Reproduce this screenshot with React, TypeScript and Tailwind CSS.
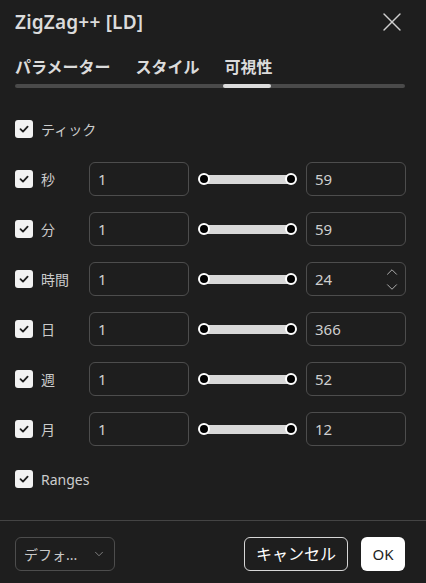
import { X, ChevronDown, ChevronUp } from "lucide-react";

const font = {
  fontFamily: '"Noto Sans", "Noto Sans CJK JP", sans-serif',
};

const rows = [
  { label: "秒", max: "59" },
  { label: "分", max: "59" },
  { label: "時間", max: "24", spin: true },
  { label: "日", max: "366" },
  { label: "週", max: "52" },
  { label: "月", max: "12" },
];

const Check = () => (
  <div className="w-[18px] h-[18px] shrink-0 rounded-[3px] bg-[#f2f2f2] flex items-center justify-center">
    <svg width="12" height="12" viewBox="0 0 12 12" fill="none">
      <path
        d="M2.5 6.2 L5 8.6 L9.6 3.6"
        stroke="#1e1e1e"
        strokeWidth="1.8"
        strokeLinecap="round"
        strokeLinejoin="round"
      />
    </svg>
  </div>
);

const Slider = () => (
  <div className="w-[99px] mx-[9px] flex items-center">
    <div className="relative z-10 w-3 h-3 shrink-0 rounded-full bg-black border-2 border-white" />
    <div className="flex-1 h-[9px] -mx-[6px] bg-[#d9d9d9]" />
    <div className="relative z-10 w-3 h-3 shrink-0 rounded-full bg-black border-2 border-white" />
  </div>
);

const Field = ({ value, spin }: { value: string; spin?: boolean }) => (
  <div
    className={
      spin
        ? "w-[100px] h-[34px] shrink-0 rounded-[6px] border border-[#4d4d4d] flex items-center justify-between pl-[8px] pr-[4px]"
        : "w-[100px] h-[34px] shrink-0 rounded-[6px] border border-[#4d4d4d] flex items-center justify-between pl-[8px] pr-[8px]"
    }
  >
    <span className="text-[15px] text-[#cfcfcf]">{value}</span>
    {spin && (
      <div className="flex flex-col items-center -space-y-[3px] text-[#bdbdbd]">
        <ChevronUp size={18} strokeWidth={1.2} />
        <ChevronDown size={18} strokeWidth={1.2} />
      </div>
    )}
  </div>
);

export default function App() {
  return (
    <div
      className="w-[426px] h-[583px] bg-[#1e1e1e] flex flex-col text-[#dbdbdb]"
      style={font}
    >
      <div className="h-[44px] flex items-center justify-between pl-[15px] pr-[18px]">
        <h1 className="text-[19px] font-semibold tracking-[0.2px]">ZigZag++ [LD]</h1>
        <X size={32} strokeWidth={1} className="text-[#cfcfcf]" />
      </div>

      <div className="mt-[11px] pl-[15px] pr-[21px]">
        <div className="flex gap-[25px] text-[16px] font-bold h-[24px] items-center">
          <span>パラメーター</span>
          <span>スタイル</span>
          <span>可視性</span>
        </div>
        <div className="mt-[5px] h-[4px] rounded-full bg-[#4a4a4a]">
          <div className="ml-[208px] w-[48px] h-full rounded-full bg-[#dcdcdc]" />
        </div>
      </div>

      <div className="mt-[16px] pl-[15px] pr-[20px] flex flex-col">
        <div className="h-[50px] flex items-center gap-[8px]">
          <Check />
          <span className="text-[14px] text-[#cccccc]">ティック</span>
        </div>
        {rows.map((r) => (
          <div key={r.label} className="h-[50px] flex items-center">
            <Check />
            <span className="ml-[8px] w-[48px] text-[14px] text-[#cccccc]">
              {r.label}
            </span>
            <Field value="1" />
            <Slider />
            <Field value={r.max} spin={r.spin} />
          </div>
        ))}
        <div className="h-[50px] flex items-center gap-[8px]">
          <Check />
          <span className="text-[14px] text-[#cccccc]">Ranges</span>
        </div>
      </div>

      <div className="mt-[16px] border-t border-[#444444] pt-[16px] pl-[15px] pr-[21px] flex items-center justify-between">
        <div className="w-[100px] h-[34px] rounded-[6px] border border-[#4d4d4d] flex items-center justify-between pl-[8px] pr-[8px]">
          <span className="text-[14px] text-[#c8c8c8]">デフォ...</span>
          <ChevronDown size={14} strokeWidth={1.5} className="text-[#8a8a8a]" />
        </div>
        <div className="flex items-center gap-[13px]">
          <button className="w-[104px] h-[34px] rounded-[6px] border border-[#d6d6d6] text-[16px] text-white">
            キャンセル
          </button>
          <button className="w-[44px] h-[34px] rounded-[6px] bg-white text-[15px] text-[#1e1e1e]">
            OK
          </button>
        </div>
      </div>
    </div>
  );
}
